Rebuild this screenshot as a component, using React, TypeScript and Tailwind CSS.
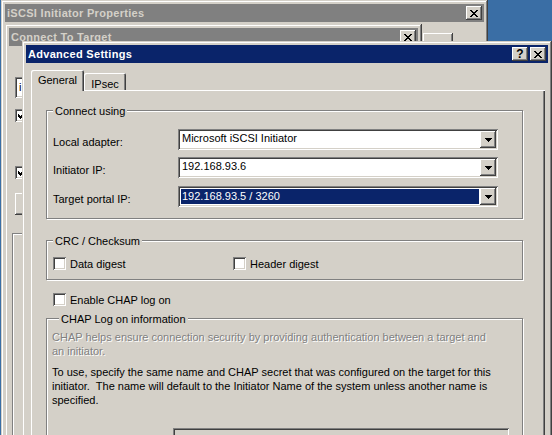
import React from "react";

const frame =
  "shadow-[inset_-1px_-1px_#404040,inset_1px_1px_#d4d0c8,inset_-2px_-2px_#808080,inset_2px_2px_#fff]";
const raised =
  "shadow-[inset_-1px_-1px_#404040,inset_1px_1px_#fff,inset_-2px_-2px_#808080,inset_2px_2px_#d4d0c8]";
const sunken =
  "shadow-[inset_1px_1px_#808080,inset_-1px_-1px_#fff,inset_2px_2px_#404040,inset_-2px_-2px_#d4d0c8]";

function CloseGlyph() {
  return (
    <svg width="8" height="7" viewBox="0 0 8 7" shapeRendering="crispEdges">
      <path
        d="M0 0h2v1H0zM6 0h2v1H6zM1 1h2v1H1zM5 1h2v1H5zM2 2h4v1H2zM3 3h2v1H3zM2 4h4v1H2zM1 5h2v1H1zM5 5h2v1H5zM0 6h2v1H0zM6 6h2v1H6z"
        fill="#000"
      />
    </svg>
  );
}

function Arrow() {
  return (
    <svg width="7" height="4" viewBox="0 0 7 4" shapeRendering="crispEdges">
      <path d="M0 0h7v1H0zM1 1h5v1H1zM2 2h3v1H2zM3 3h1v1H3z" fill="#000" />
    </svg>
  );
}

function Check() {
  return (
    <svg width="7" height="7" viewBox="0 0 7 7" shapeRendering="crispEdges">
      <path
        d="M6 0h1v1H6zM5 1h2v1H5zM0 2h1v1H0zM4 2h3v1H4zM0 3h2v1H0zM3 3h3v1H3zM0 4h5v1H0zM1 5h3v1H1zM2 6h1v1H2z"
        fill="#000"
      />
    </svg>
  );
}

function TBtn({ children, className = "" }: { children: React.ReactNode; className?: string }) {
  return (
    <div
      className={`w-[16px] h-[14px] shrink-0 bg-[#d4d0c8] flex items-center justify-center text-black ${raised} ${className}`}
    >
      {children}
    </div>
  );
}

function TitleBar({ title, active, help }: { title: string; active?: boolean; help?: boolean }) {
  return (
    <div
      className={`h-[18px] flex items-center pl-[2px] pr-[2px] ${
        active ? "bg-[#0a246a] text-white" : "bg-[#808080] text-[#d4d0c8]"
      }`}
    >
      <span className="flex-1 font-bold tracking-[0.3px] whitespace-nowrap overflow-hidden">{title}</span>
      {help && (
        <TBtn>
          <span className="font-bold text-[12px] leading-[12px]">?</span>
        </TBtn>
      )}
      <TBtn className={help ? "ml-[2px]" : ""}>
        <CloseGlyph />
      </TBtn>
    </div>
  );
}

function CheckBox({ checked }: { checked?: boolean }) {
  return (
    <div className={`w-[13px] h-[13px] shrink-0 bg-white flex items-center justify-center ${sunken}`}>
      {checked && <Check />}
    </div>
  );
}

function Combo({ value, selected }: { value: string; selected?: boolean }) {
  return (
    <div className={`w-[320px] h-[21px] bg-white p-[2px] flex ${sunken}`}>
      <div className="flex-1 flex items-start">
        {selected ? (
          <div className="m-[1px] h-[15px] flex-1 bg-[#0a246a] text-white pl-[1px] leading-[15px] whitespace-nowrap">
            {value}
          </div>
        ) : (
          <div className="pl-[2px] whitespace-nowrap">{value}</div>
        )}
      </div>
      <div className={`w-[16px] h-[17px] bg-[#d4d0c8] flex items-center justify-center ${raised}`}>
        <Arrow />
      </div>
    </div>
  );
}

function Group({
  label,
  labelClass = "left-[6px]",
  className = "",
  children,
}: {
  label: string;
  labelClass?: string;
  className?: string;
  children: React.ReactNode;
}) {
  return (
    <div
      className={`relative w-[477px] border border-[#808080] shadow-[1px_1px_0_#fff,inset_1px_1px_0_#fff] ${className}`}
    >
      <span className={`absolute top-[-7px] bg-[#d4d0c8] px-[2px] whitespace-nowrap ${labelClass}`}>{label}</span>
      {children}
    </div>
  );
}

function Row({ label, children, className = "" }: { label: string; children: React.ReactNode; className?: string }) {
  return (
    <div className={`flex h-[21px] ${className}`}>
      <div className="w-[125px] pt-[6px] whitespace-nowrap">{label}</div>
      {children}
    </div>
  );
}

const disabled = "text-[#808080] [text-shadow:1px_1px_0_#fff]";

export default function App() {
  return (
    <div className="relative w-[552px] h-[435px] overflow-hidden bg-[#3a6ea5] font-['Liberation_Sans',Arial,sans-serif] text-[11px] leading-[14px] text-black">
      {/* iSCSI Initiator Properties (inactive, back) */}
      <div className={`absolute left-[1px] top-0 w-[487px] h-[470px] bg-[#d4d0c8] p-[4px] ${frame}`}>
        <TitleBar title="iSCSI Initiator Properties" />
        <div className={`ml-[418px] mt-[11px] w-[30px] h-[23px] bg-[#d4d0c8] ${raised}`} />
      </div>

      {/* Connect To Target (inactive, middle) */}
      <div className={`absolute left-[5px] top-[24px] w-[417px] h-[450px] bg-[#d4d0c8] p-[4px] ${frame}`}>
        <TitleBar title="Connect To Target" />
        <div className={`ml-[6px] mt-[31px] w-[300px] h-[21px] bg-white ${sunken} pl-[4px] pt-[3px]`}>
          i
        </div>
        <div className="ml-[6px] mt-[11px]">
          <CheckBox checked />
        </div>
        <div className="ml-[6px] mt-[44px]">
          <CheckBox checked />
        </div>
        <div className={`ml-[6px] mt-[14px] w-[80px] h-[22px] bg-[#d4d0c8] ${raised}`} />
        <div className="ml-[3px] mt-[18px] w-[400px] h-[250px] border border-[#808080] shadow-[1px_1px_0_#fff,inset_1px_1px_0_#fff]" />
      </div>

      {/* Advanced Settings (active, front) */}
      <div className={`absolute left-[22px] top-[41px] w-[530px] h-[420px] bg-[#d4d0c8] p-[4px] ${frame}`}>
        <TitleBar title="Advanced Settings" active help />
        <div className="pl-[5px] pt-[7px]">
          <div className="relative z-10 flex items-end h-[20px]">
            <div className="w-[53px] h-[21px] mb-[-1px] bg-[#d4d0c8] flex justify-center pt-[3px] rounded-t-[2px] shadow-[inset_1px_1px_#fff,inset_-1px_0_#404040,inset_-2px_0_#808080]">
              General
            </div>
            <div className="w-[42px] h-[17px] bg-[#d4d0c8] flex justify-center pt-[4px] rounded-t-[2px] shadow-[inset_1px_1px_#fff,inset_-1px_0_#404040,inset_-2px_0_#808080]">
              IPsec
            </div>
          </div>
          <div className="w-[514px] h-[360px] pt-[20px] pl-[15px] shadow-[inset_1px_1px_#fff,inset_-1px_-1px_#404040,inset_-2px_-2px_#808080]">
            <Group label="Connect using" className="pt-[18px] pb-[11px] pl-[6px]">
              <Row label="Local adapter:">
                <Combo value="Microsoft iSCSI Initiator" />
              </Row>
              <Row label="Initiator IP:" className="mt-[7px]">
                <Combo value="192.168.93.6" />
              </Row>
              <Row label="Target portal IP:" className="mt-[8px]">
                <Combo value="192.168.93.5 / 3260" selected />
              </Row>
            </Group>

            <Group label="CRC / Checksum" className="mt-[21px] pt-[16px] pb-[9px] pl-[6px]">
              <div className="flex h-[13px]">
                <div className="w-[180px] flex items-center gap-[4px]">
                  <CheckBox />
                  <span className="whitespace-nowrap">Data digest</span>
                </div>
                <div className="flex items-center gap-[4px]">
                  <CheckBox />
                  <span className="whitespace-nowrap">Header digest</span>
                </div>
              </div>
            </Group>

            <div className="mt-[13px] ml-[7px] h-[13px] flex items-center gap-[4px]">
              <CheckBox />
              <span className="whitespace-nowrap">Enable CHAP log on</span>
            </div>

            <Group
              label="CHAP Log on information"
              labelClass="left-[12px]"
              className="mt-[12px] pt-[11px] pl-[5px] h-[140px]"
            >
              <div className={`whitespace-pre ${disabled}`}>
                <div>CHAP helps ensure connection security by providing authentication between a target and</div>
                <div>an initiator.</div>
              </div>
              <div className="mt-[7px] whitespace-pre">
                <div>To use, specify the same name and CHAP secret that was configured on the target for this</div>
                <div>initiator.  The name will default to the Initiator Name of the system unless another name is</div>
                <div>specified.</div>
              </div>
              <div className={`mt-[21px] ml-[121px] w-[336px] h-[21px] bg-[#d4d0c8] ${sunken}`} />
            </Group>
          </div>
        </div>
      </div>
    </div>
  );
}
